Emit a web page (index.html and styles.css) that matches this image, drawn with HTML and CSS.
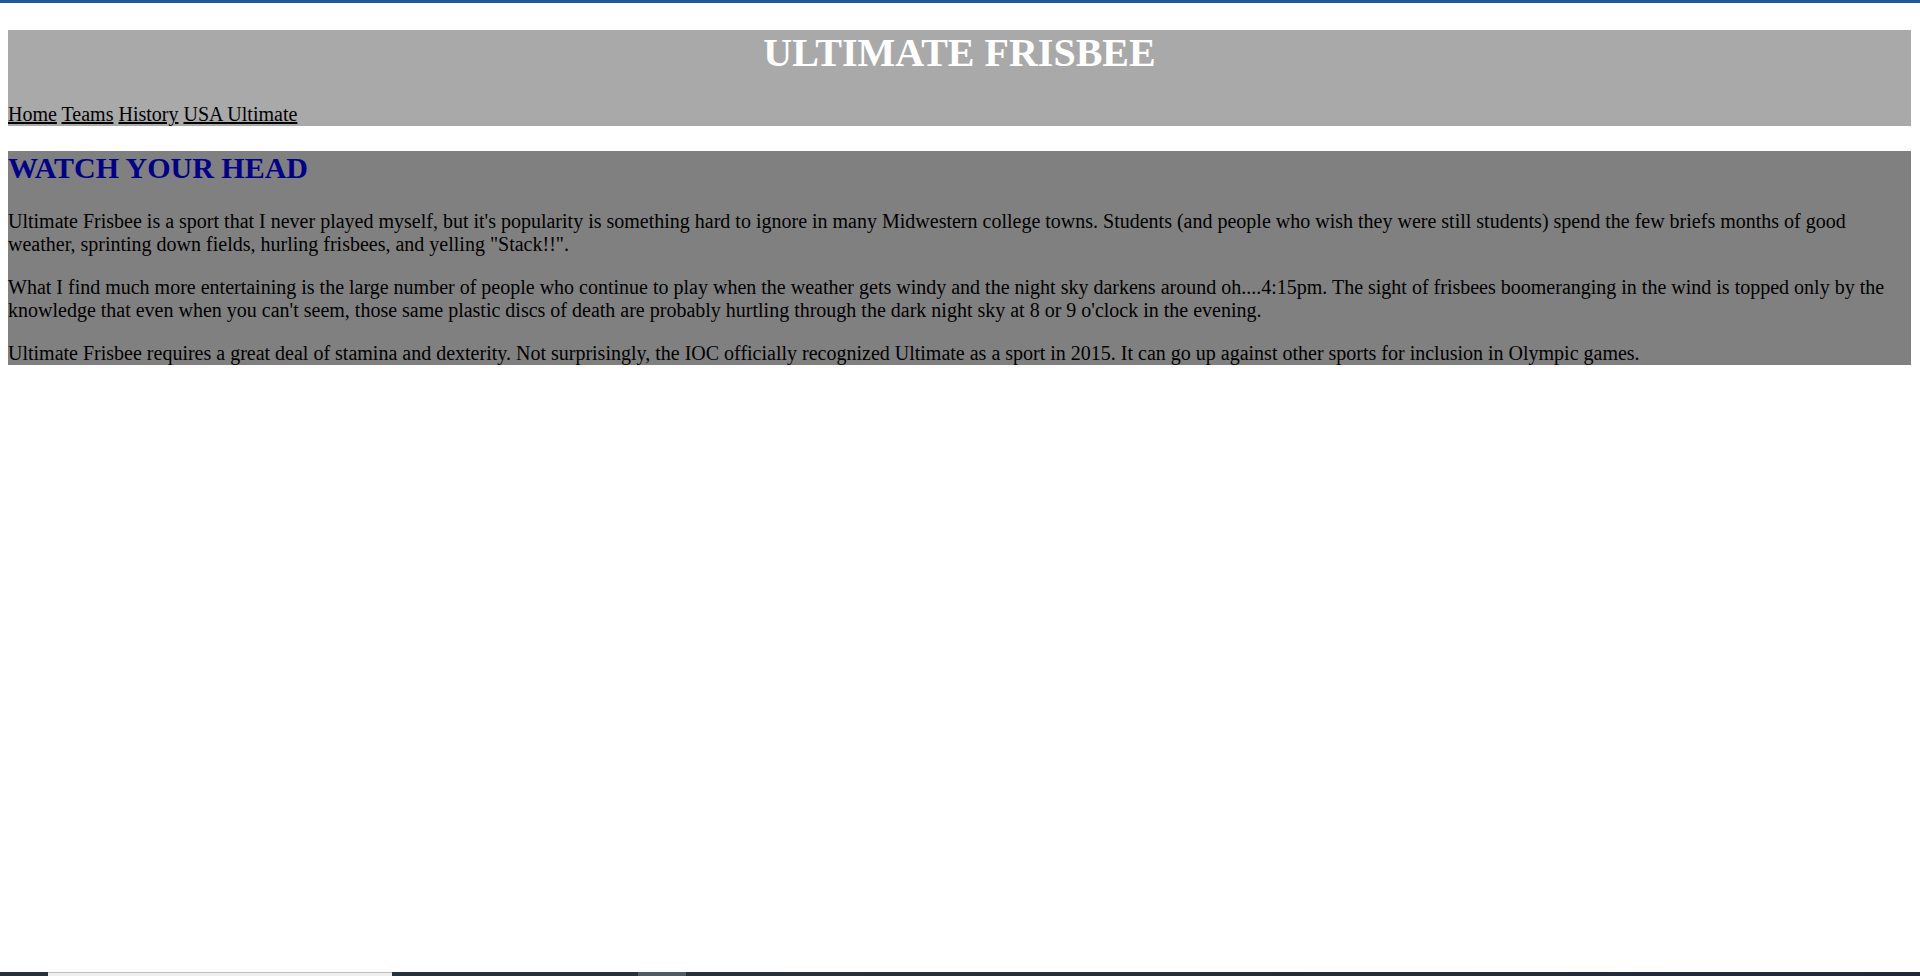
FILE: index.html
```html
<!DOCTYPE html>
<html lang="en">
<head>
<meta charset="utf-8">
<title>Ultimate Frisbee</title>
<link rel="stylesheet" href="styles.css">
</head>
<body>
<div class="screen">
  <div class="chrome-line"></div>
  <div class="page">
    <header class="masthead">
      <h1 class="title">ULTIMATE FRISBEE</h1>
      <nav class="nav">
        <a href="#" class="nav-link">Home</a>
        <a href="#" class="nav-link">Teams</a>
        <a href="#" class="nav-link">History</a>
        <a href="#" class="nav-link">USA Ultimate</a>
      </nav>
    </header>
    <section class="article">
      <h2 class="article-title">WATCH YOUR HEAD</h2>
      <p class="para">Ultimate Frisbee is a sport that I never played myself, but it's popularity is something hard to ignore in many Midwestern college towns. Students (and people who wish they were still students) spend the few briefs months of good weather, sprinting down fields, hurling frisbees, and yelling "Stack!!".</p>
      <p class="para">What I find much more entertaining is the large number of people who continue to play when the weather gets windy and the night sky darkens around oh....4:15pm. The sight of frisbees boomeranging in the wind is topped only by the knowledge that even when you can't seem, those same plastic discs of death are probably hurtling through the dark night sky at 8 or 9 o'clock in the evening.</p>
      <p class="para">Ultimate Frisbee requires a great deal of stamina and dexterity. Not surprisingly, the IOC officially recognized Ultimate as a sport in 2015. It can go up against other sports for inclusion in Olympic games.</p>
    </section>
  </div>
  <div class="taskbar">
    <div class="tb-dark tb-start"></div>
    <div class="tb-light"></div>
    <div class="tb-dark tb-mid"></div>
    <div class="tb-grey"></div>
    <div class="tb-dark tb-rest"></div>
  </div>
</div>
</body>
</html>
```

FILE: styles.css
```css
html, body {
  margin: 0;
  padding: 0;
  background: #ffffff;
}

.screen {
  display: flex;
  flex-direction: column;
  height: 976px;
  overflow: hidden;
}

.chrome-line {
  height: 3px;
  background: #1f5a9e;
  flex: none;
}

.page {
  flex: 1;
  padding: 27px 9px 0 8px;
  font-family: "Liberation Serif", "Times New Roman", serif;
  font-size: 20px;
  color: #000;
}

.masthead {
  background: #a9a9a9;
}

.title {
  margin: 0 0 27px 0;
  font-size: 40px;
  font-weight: bold;
  color: #ffffff;
  text-align: center;
  line-height: 46px;
}

.nav {
  line-height: 23px;
}

.nav-link {
  color: #000;
  text-decoration: underline;
}

.article {
  margin-top: 25px;
  background: #808080;
  display: flow-root;
}

.article-title {
  margin: 0 0 25px 0;
  font-size: 30px;
  font-weight: bold;
  color: #00008b;
  line-height: 34px;
}

.para {
  margin: 0 0 20px 0;
  line-height: 23px;
}

.para:last-child {
  margin-bottom: 0;
}

.taskbar {
  flex: none;
  height: 4px;
  display: flex;
}

.tb-dark {
  background: #25323a;
}

.tb-start {
  width: 48px;
}

.tb-light {
  width: 344px;
  background: #f0f0f0;
  border-top: 1px solid #bdbdbd;
  box-sizing: border-box;
}

.tb-mid {
  width: 246px;
}

.tb-grey {
  width: 48px;
  background: #4d5b62;
}

.tb-rest {
  flex: 1;
  background: linear-gradient(90deg, #25323a, #1e2a38);
}
```
